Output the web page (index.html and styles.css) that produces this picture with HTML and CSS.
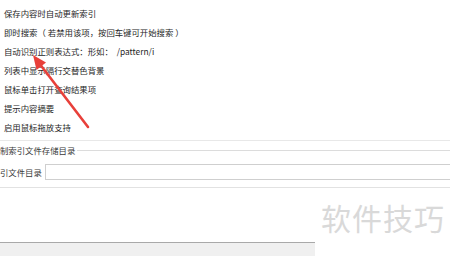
FILE: index.html
```html
<!DOCTYPE html>
<html lang="zh-CN">
<head>
    <meta charset="UTF-8">
    <title>索引设置</title>
    <link rel="stylesheet" href="styles.css">
</head>
<body>
    <div class="page">
        <!-- Options -->
        <ul class="options">
            <li>保存内容时自动更新索引</li>
            <li>即时搜索（ 若禁用该项，按回车键可开始搜索 ）</li>
            <li>自动识别正则表达式：形如：&nbsp; /pattern/i</li>
            <li>列表中显示隔行交替色背景</li>
            <li>鼠标单击打开查询结果项</li>
            <li>提示内容摘要</li>
            <li>启用鼠标拖放支持</li>
        </ul>

        <div class="sep"></div>

        <!-- Index folder group -->
        <div class="group">
            <div class="group-title">
                <span>制索引文件存储目录</span>
                <i class="rule"></i>
            </div>
            <div class="field">
                <label>引文件目录</label>
                <input type="text" class="path-input">
            </div>
        </div>

        <div class="spacer"></div>
        <div class="status-bar"></div>
    </div>

    <!-- Red pointer arrow -->
    <svg class="arrow" width="450" height="256" viewBox="0 0 450 256">
        <path d="M88 127 L39 63" stroke="#e8403a" stroke-width="2.6" stroke-linecap="round" fill="none"/>
        <polygon points="33,55 46,62.5 36.5,70" fill="#e8403a"/>
    </svg>

    <div class="watermark">软件技巧</div>
</body>
</html>
```

FILE: styles.css
```css
/* Global Styles */
* {
    box-sizing: border-box;
    margin: 0;
    padding: 0;
}

body {
    width: 450px;
    height: 256px;
    overflow: hidden;
    background-color: #fff;
    color: #262626;
    font-family: "Noto Sans CJK SC", "Noto Sans", sans-serif;
    font-size: 8.4px;
}

.page {
    height: 256px;
    display: flex;
    flex-direction: column;
}

/* Option rows */
.options {
    list-style-type: none;
    padding: 4px 0 0 4px;
}

.options li {
    height: 19px;
    line-height: 19px;
    white-space: nowrap;
}

.sep {
    margin-top: 3px;
    border-top: 1px solid #e8e8e8;
}

/* Group box */
.group {
    border-bottom: 1px solid #e2e2e2;
}

.group-title {
    height: 18px;
    display: flex;
    align-items: center;
    color: #3a3a3a;
}

.group-title span {
    white-space: nowrap;
}

.group-title .rule {
    flex: 1;
    height: 1px;
    margin-left: 2px;
    background-color: #dcdcdc;
}

.field {
    display: flex;
    align-items: center;
    padding: 5px 0 7px 0;
}

.field label {
    width: 45px;
    white-space: nowrap;
    color: #3a3a3a;
}

.path-input {
    flex: 1;
    height: 16px;
    margin-right: -4px;
    border: 1px solid #cfcfcf;
    background-color: #fff;
}

.spacer {
    flex: 1;
}

.status-bar {
    width: 315px;
    height: 14px;
    border-top: 1px solid #a9a9a9;
    background-color: #f0f0f0;
}

/* Overlays */
.arrow {
    position: absolute;
    top: 0;
    left: 0;
}

.watermark {
    position: absolute;
    left: 315px;
    top: 196px;
    width: 135px;
    height: 60px;
    padding: 0 0 0 6px;
    background-color: #fff;
    color: #d9d9d9;
    font-size: 30px;
    line-height: 42px;
    letter-spacing: 1px;
    white-space: nowrap;
}
```
